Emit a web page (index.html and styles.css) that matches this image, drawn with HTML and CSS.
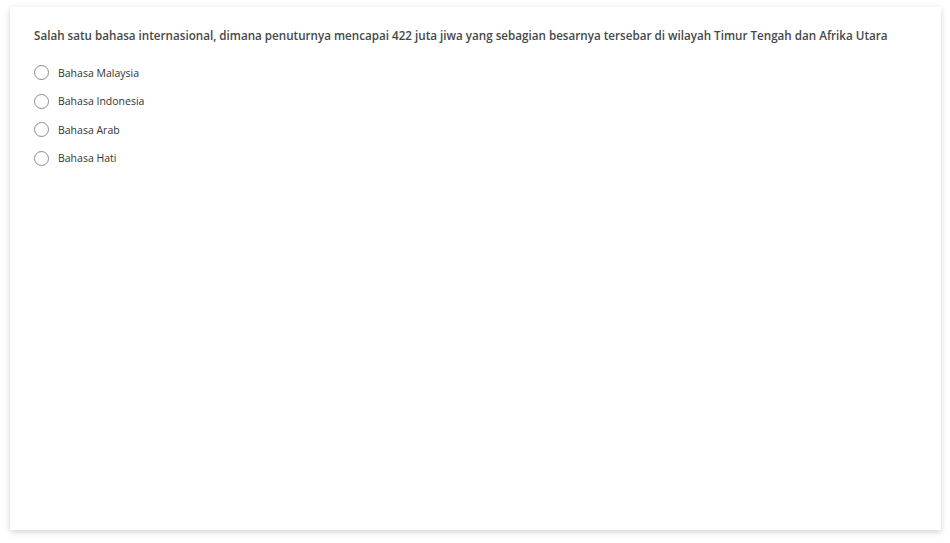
FILE: index.html
```html
<!DOCTYPE html>
<html lang="id">
<head>
<meta charset="utf-8">
<link rel="stylesheet" href="styles.css">
</head>
<body>
<div class="card">
  <p class="question">Salah satu bahasa internasional, dimana penuturnya mencapai 422 juta jiwa yang sebagian besarnya tersebar di wilayah Timur Tengah dan Afrika Utara</p>
  <ul class="options">
    <li class="option"><span class="radio"></span><span class="label">Bahasa Malaysia</span></li>
    <li class="option"><span class="radio"></span><span class="label">Bahasa Indonesia</span></li>
    <li class="option"><span class="radio"></span><span class="label">Bahasa Arab</span></li>
    <li class="option"><span class="radio"></span><span class="label">Bahasa Hati</span></li>
  </ul>
</div>
</body>
</html>
```

FILE: styles.css
```css
html, body {
  margin: 0;
  padding: 0;
  background: #ffffff;
}
body {
  padding: 7px 9px 13px 10px;
  font-family: "Open Sans", "Noto Sans", sans-serif;
  color: #333333;
  box-sizing: border-box;
  height: 543px;
}
.card {
  height: 523px;
  background: #fff;
  box-shadow: 0 2px 6px rgba(0,0,0,0.18);
  padding: 20px 24px;
  box-sizing: border-box;
}
.question {
  margin: 0;
  font-size: 11.65px;
  line-height: 18px;
  font-weight: 600;
  color: #474747;
}
.options {
  list-style: none;
  margin: 20px 0 0 0;
  padding: 0;
  display: flex;
  flex-direction: column;
  gap: 13.5px;
}
.option {
  display: flex;
  align-items: center;
  height: 15px;
}
.radio {
  width: 15px;
  height: 15px;
  border: 1px solid #8c8c8c;
  border-radius: 50%;
  box-sizing: border-box;
  flex: none;
  margin-right: 9px;
}
.label {
  font-size: 10.5px;
  color: #333;
}
```
